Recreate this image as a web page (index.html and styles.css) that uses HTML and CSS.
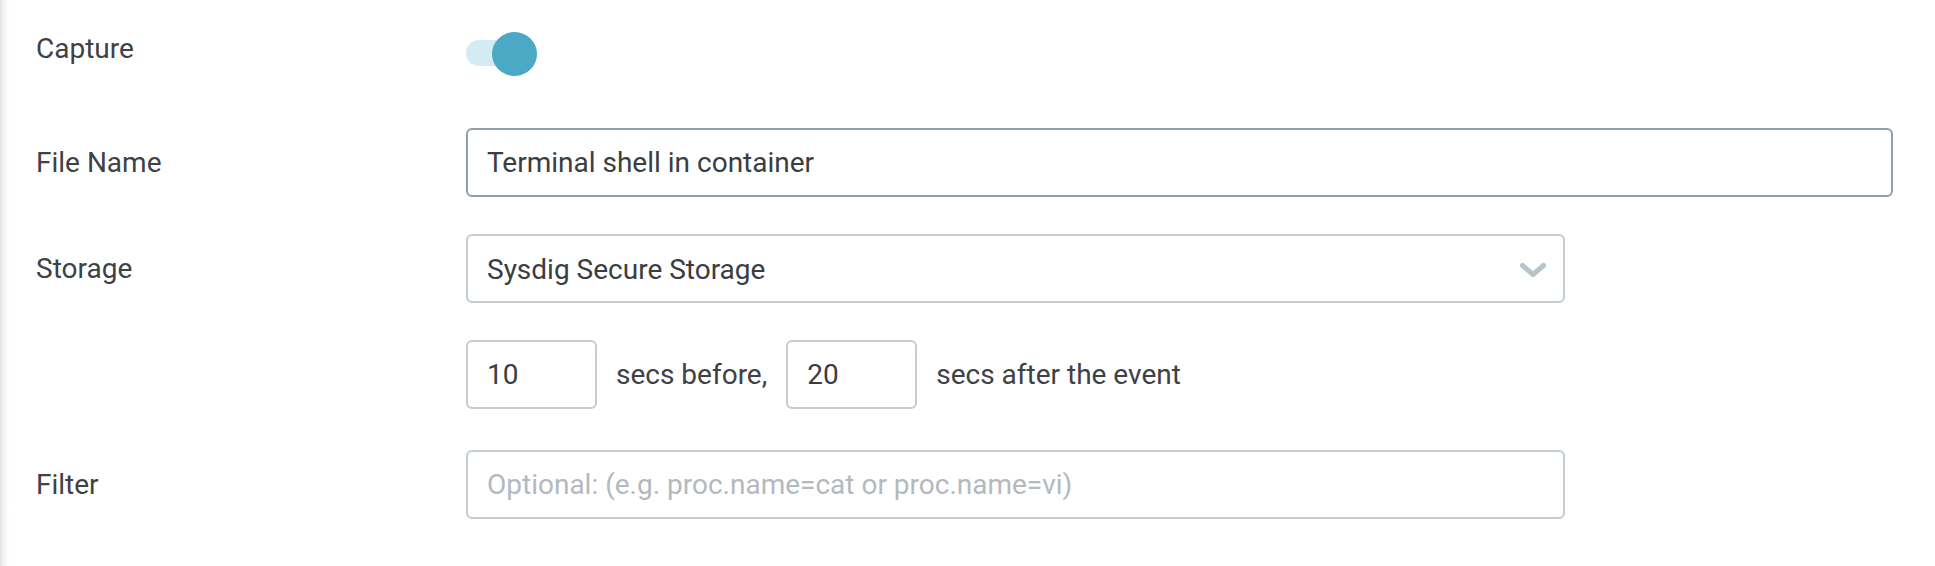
FILE: index.html
```html
<!DOCTYPE html>
<html lang="en">
<head>
<meta charset="utf-8">
<title>Capture settings</title>
<link rel="stylesheet" href="styles.css">
</head>
<body>
<div class="page">
  <form class="form">
    <label class="label label-top">Capture</label>
    <div class="field field-top">
      <div class="toggle" role="switch" aria-checked="true">
        <span class="toggle-track"></span>
        <span class="toggle-knob"></span>
      </div>
    </div>

    <label class="label">File Name</label>
    <div class="field">
      <input class="input input-focus input-full" type="text" value="Terminal shell in container">
    </div>

    <label class="label">Storage</label>
    <div class="field">
      <div class="select">
        <span class="select-value">Sysdig Secure Storage</span>
        <svg class="chevron" width="28" height="16" viewBox="0 0 28 16" aria-hidden="true">
          <path d="M3.5 3.5 L14 12.5 L24.5 3.5" fill="none" stroke="#b9c3ca" stroke-width="5" stroke-linecap="round" stroke-linejoin="round"/>
        </svg>
      </div>
    </div>

    <span class="label"></span>
    <div class="field duration">
      <input class="input input-small" type="text" value="10">
      <span class="inline-text">secs before,</span>
      <input class="input input-small" type="text" value="20">
      <span class="inline-text">secs after the event</span>
    </div>

    <label class="label label-filter">Filter</label>
    <div class="field field-filter">
      <input class="input input-wide" type="text" placeholder="Optional: (e.g. proc.name=cat or proc.name=vi)">
    </div>
  </form>
</div>
</body>
</html>
```

FILE: styles.css
```css
* {
  box-sizing: border-box;
}

html, body {
  margin: 0;
  padding: 0;
  height: 100%;
}

body {
  background: linear-gradient(to right, #e2e2e2 0px, #f4f4f4 4px, #ffffff 9px);
  font-family: Roboto, "Liberation Sans", Arial, sans-serif;
  color: #3e4145;
}

.page {
  padding: 32px 42px 0 36px;
}

.form {
  display: grid;
  grid-template-columns: 430px 1fr;
  row-gap: 37px;
  align-items: center;
}

.label {
  font-size: 28px;
  line-height: 33px;
  color: #3e4145;
}

.label-top {
  align-self: start;
  margin-bottom: 15px;
}

.field-top {
  align-self: start;
  margin-bottom: 15px;
}

.label-filter,
.field-filter {
  margin-top: 4px;
}

.field {
  display: flex;
  align-items: center;
}

/* toggle */
.toggle {
  position: relative;
  width: 72px;
  height: 44px;
}

.toggle-track {
  position: absolute;
  left: 0;
  top: 8px;
  width: 64px;
  height: 26px;
  border-radius: 13px;
  background: #d3ebf2;
}

.toggle-knob {
  position: absolute;
  left: 26px;
  top: 0;
  width: 45px;
  height: 44px;
  border-radius: 50%;
  background: #4ba9c6;
}

/* inputs */
.input {
  height: 69px;
  border: 2px solid #c2ccd2;
  border-radius: 6px;
  padding: 0 19px;
  font-family: Roboto, "Liberation Sans", Arial, sans-serif;
  font-size: 28px;
  color: #3a3d41;
  background: #fff;
  outline: none;
}

.input::placeholder {
  color: #b3b9be;
}

.input-focus {
  border-color: #8f9fac;
}

.input-full {
  width: 100%;
}

.input-wide {
  width: 1099px;
}

.input-small {
  width: 131px;
}

.select {
  width: 1099px;
  height: 69px;
  border: 2px solid #c2ccd2;
  border-radius: 6px;
  padding: 0 16px 0 19px;
  display: flex;
  align-items: center;
  justify-content: space-between;
  font-size: 28px;
  color: #3a3d41;
}

.select-value {
  padding-top: 1px;
}

.chevron {
  display: block;
  margin-top: 2px;
}

.duration {
  gap: 19px;
}

.inline-text {
  font-size: 28px;
  color: #3e4145;
}
```
